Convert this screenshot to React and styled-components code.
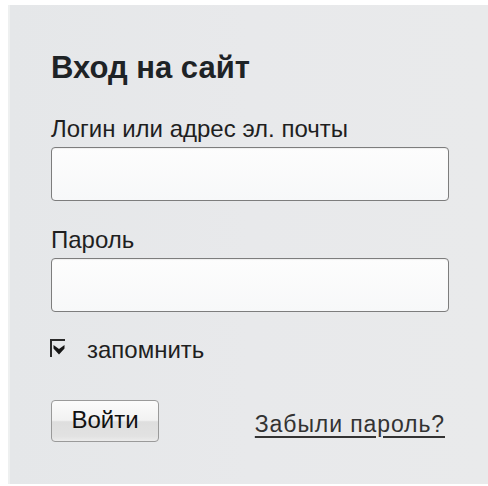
import React from "react";
import styled, { createGlobalStyle } from "styled-components";

const Global = createGlobalStyle`
  html, body { margin: 0; padding: 0; background: #ffffff; }
  body { font-family: "Liberation Sans", Arial, sans-serif; }
  * { box-sizing: border-box; }
`;

const Page = styled.div`
  width: 488px;
  height: 486px;
  padding: 5px 0 2px 8px;
  background: #ffffff;
`;

const Panel = styled.form`
  height: 100%;
  display: flex;
  flex-direction: column;
  padding: 47px 39px 0 41px;
  background: linear-gradient(90deg, #e5e7e9 0%, #e8e9eb 50%, #e9eaeb 100%);
  border-left: 2px solid #eef0f0;
`;

const Title = styled.h1`
  margin: 0 0 34px 0;
  font-size: 31px;
  line-height: 31px;
  font-weight: bold;
  color: #1e2326;
`;

const Label = styled.label`
  display: block;
  margin: ${(p) => p.$top || 0}px 0 6px 0;
  font-size: 24px;
  line-height: 24px;
  color: #1f1f1f;
`;

const Input = styled.input`
  display: block;
  width: 100%;
  height: 54px;
  margin: 0;
  border: 1px solid #7d7d7d;
  border-radius: 4px;
  background: linear-gradient(180deg, #fdfdfd 0%, #f7f8f9 100%);
  box-shadow: inset 0 1px 1px rgba(0, 0, 0, 0.06);
  outline: none;
  font: inherit;
`;

const CheckRow = styled.div`
  display: flex;
  align-items: flex-start;
  gap: 22px;
  margin-top: 26px;
`;

const CheckBox = styled.span`
  display: inline-flex;
  align-items: flex-start;
  justify-content: center;
  width: 15px;
  height: 18px;
  margin-top: 1px;
  margin-left: -1px;
  padding-top: 3px;
  border-top: 2px solid #2a2a2a;
  border-left: 2px solid #2a2a2a;
`;

const CheckText = styled.span`
  font-size: 24px;
  line-height: 24px;
  color: #1f1f1f;
`;

const Actions = styled.div`
  display: flex;
  align-items: center;
  justify-content: space-between;
  margin-top: 38px;
  padding-right: 4px;
`;

const Button = styled.button`
  width: 108px;
  height: 42px;
  padding: 0 0 2px;
  border: 1px solid #9a9a9a;
  border-radius: 4px;
  background: linear-gradient(
    180deg,
    #fbfbfb 0%,
    #f2f2f2 48%,
    #dedede 52%,
    #e2e2e2 88%,
    #ececec 100%
  );
  font-family: "Liberation Sans", Arial, sans-serif;
  font-size: 24px;
  line-height: 24px;
  color: #111;
`;

const Link = styled.a`
  margin-top: 6px;
  font-size: 23px;
  line-height: 24px;
  letter-spacing: 0.9px;
  color: #333;
  text-decoration: underline;
  text-underline-offset: 4px;
`;

export default function App() {
  return (
    <>
      <Global />
      <Page>
        <Panel>
          <Title>Вход на сайт</Title>
          <Label>Логин или адрес эл. почты</Label>
          <Input type="text" />
          <Label $top={27}>Пароль</Label>
          <Input type="password" />
          <CheckRow>
            <CheckBox>
              <svg width="12" height="11" viewBox="0 0 12 11">
                <path d="M0.5 1 L6 5 L11.5 1 L11.5 4.5 L6 10.5 L0.5 4.5 Z" fill="#161616" />
              </svg>
            </CheckBox>
            <CheckText>запомнить</CheckText>
          </CheckRow>
          <Actions>
            <Button type="button">Войти</Button>
            <Link href="#">Забыли пароль?</Link>
          </Actions>
        </Panel>
      </Page>
    </>
  );
}
